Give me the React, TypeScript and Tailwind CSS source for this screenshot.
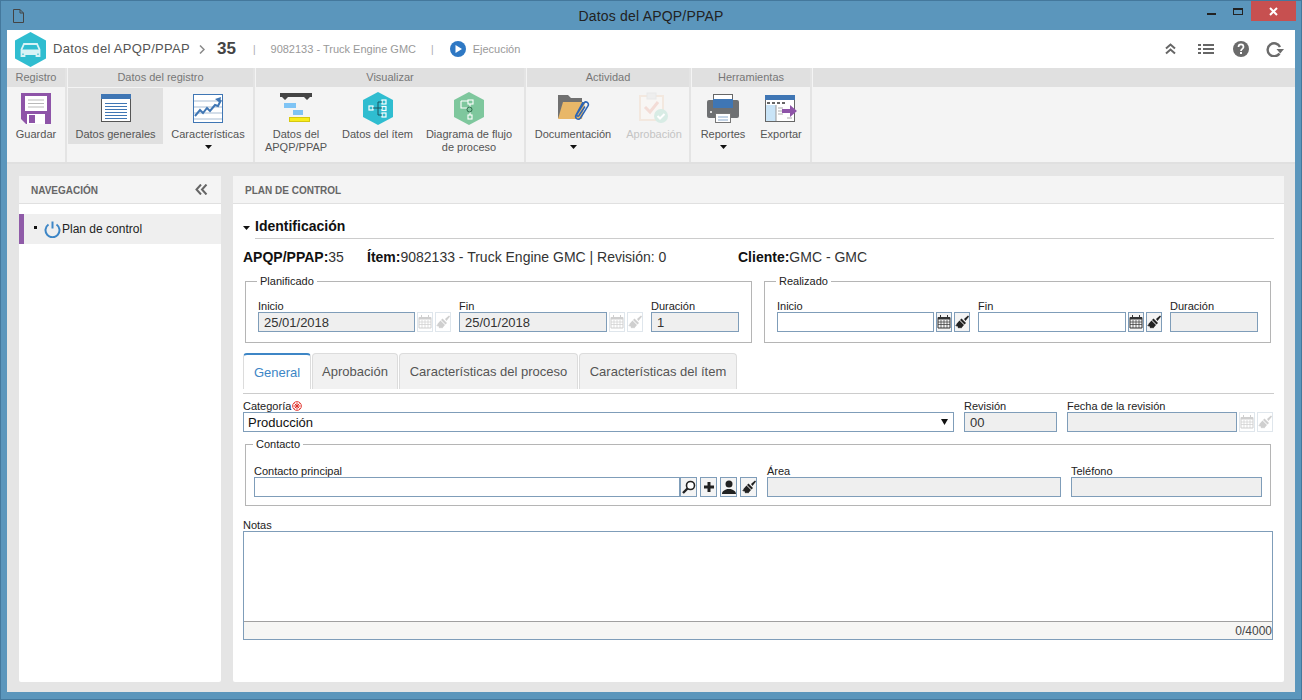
import React from "react";

const Caret = ({ className = "" }: { className?: string }) => (
  <svg width="7" height="4" viewBox="0 0 7 4" className={className}><path d="M0 0h7L3.500 4z" fill="#111" /></svg>
);

const Floppy = () => (
  <svg width="31" height="31" viewBox="0 0 31 31">
    <path d="M0 0h30v31H5l-5-5z" fill="#8e54a8" />
    <rect x="4" y="3" width="22" height="15" fill="#fff" />
    <path d="M7 7h16M7 10.500h16M7 14h16" stroke="#b9b9b9" strokeWidth="1" />
    <rect x="6" y="21" width="18" height="10" fill="#fff" />
    <rect x="8" y="22" width="6" height="8" fill="#8e54a8" />
  </svg>
);
const GeneralIcon = () => (
  <svg width="30" height="28" viewBox="0 0 30 28">
    <rect x=".5" y=".5" width="29" height="27" fill="#fff" stroke="#555" />
    <rect width="30" height="5" fill="#3f76b4" />
    <path d="M4 9.500h22M4 12.500h22M4 15.500h22M4 18.500h22M4 21.500h22M4 24.500h22" stroke="#3f76b4" strokeWidth="1" />
  </svg>
);
const ChartIcon = () => (
  <svg width="30" height="29" viewBox="0 0 30 29">
    <rect x=".5" y=".5" width="29" height="28" fill="#fff" stroke="#3f76b4" />
    <path d="M1 7h28M1 13h28M1 19h28M1 25h28" stroke="#a9bdd3" strokeWidth="1" />
    <path d="M2 22l5-6 3 3 4-5 3 3 5-6 3 1 3-6" fill="none" stroke="#3f76b4" strokeWidth="2" />
    <path d="M22 5l6-2-1 6z" fill="#3f76b4" />
  </svg>
);
const GanttIcon = () => (
  <svg width="33" height="30" viewBox="0 0 33 30">
    <rect width="32" height="4" fill="#444" />
    <path d="M2 4h6l-3 3zM24 4h6l-3 3z" fill="#444" />
    <rect x="4" y="10" width="12" height="5" fill="#7fc4f5" />
    <rect x="13" y="17" width="10" height="5" fill="#7fc4f5" />
    <rect x="9.500" y="24.500" width="20" height="4" fill="#f8ec1c" stroke="#d6c80f" />
  </svg>
);
const Hex = ({ color, children }: { color: string; children: React.ReactNode }) => (
  <svg width="30" height="33" viewBox="0 0 30 33">
    <path d="M15 0l15 8v17l-15 8-15-8V8z" fill={color} />
    {children}
  </svg>
);
const TreeHex = () => (
  <Hex color="#2fbdd0">
    <g fill="none" stroke="#fff" strokeWidth="1.200">
      <rect x="6" y="14" width="4" height="4" />
      <rect x="19" y="8" width="4" height="4" />
      <rect x="19" y="14.500" width="4" height="4" />
      <rect x="19" y="21" width="4" height="4" />
    </g>
    <path d="M10 16h9M15 10v13M15 10h4M15 23h4" stroke="#1d5560" strokeWidth="1" fill="none" />
  </Hex>
);
const FlowHex = () => (
  <Hex color="#7ec79d">
    <g fill="none" stroke="#fff" strokeWidth="1.100">
      <rect x="14" y="8" width="5" height="4" />
      <rect x="14" y="23" width="4" height="4" />
      <path d="M7 9h7M7 9v7h7M16 12v3M16 20v3" />
    </g>
    <circle cx="15.500" cy="17.500" r="2.500" fill="none" stroke="#2e6b4c" strokeWidth="1" />
  </Hex>
);
const FolderIcon = () => (
  <svg width="33" height="32" viewBox="0 0 33 32">
    <path d="M1 3h10l3 3h11v20H1z" fill="#707070" />
    <path d="M6 10h22l-3 17H1z" fill="#e8b768" />
    <path d="M26 10l-7 13c-1.500 3 2 6 4.500 3L31 14c1.500-3-2-5.500-4-3l-7 11c-1 1.500.8 3 2 1.500l6-9" fill="none" stroke="#2b64b5" strokeWidth="1.500" />
  </svg>
);
const ApprovalIcon = () => (
  <svg width="30" height="32" viewBox="0 0 30 32">
    <rect x="1" y="4" width="23" height="24" fill="#f8f6f4" stroke="#f3e8df" strokeWidth="2" />
    <rect x="8" y="1" width="9" height="6" fill="#eee" stroke="#e8e8e8" />
    <path d="M6 15l5 5 8-10" fill="none" stroke="#f3dcd6" strokeWidth="3" />
    <circle cx="22" cy="24" r="7" fill="#d8ece5" />
    <path d="M18.500 24l2.500 2.500 4.500-4.500" fill="none" stroke="#fff" strokeWidth="2" />
  </svg>
);
const PrinterIcon = () => (
  <svg width="32" height="29" viewBox="0 0 32 29">
    <rect x="6.500" y=".5" width="19" height="8" fill="#fff" stroke="#666" />
    <path d="M2 6h28a2 2 0 012 2v14a2 2 0 01-2 2H2a2 2 0 01-2-2V8a2 2 0 012-2z" fill="#6e7072" />
    <rect x="6" y="5" width="20" height="9" fill="#3f76b4" />
    <rect x="3" y="17" width="2" height="2" fill="#ddd" />
    <rect x="8.500" y="19.500" width="15" height="9" fill="#fff" stroke="#777" />
    <path d="M11 23h10M11 26h10" stroke="#88a8cc" strokeWidth="1" />
  </svg>
);
const ExportIcon = () => (
  <svg width="32" height="27" viewBox="0 0 32 27">
    <rect x=".5" y=".5" width="29" height="26" fill="#fff" stroke="#666" />
    <rect width="30" height="5" fill="#3f76b4" />
    <rect x="1" y="10" width="10" height="16" fill="#c9e4f7" />
    <path d="M2 8h3M7 8h3M12 8h3M17 8h3" stroke="#666" strokeWidth="2" />
    <path d="M11 10v16" stroke="#999" />
    <path d="M13 13h5M13 16h5M13 19h5M22 23h5" stroke="#aaa" />
    <path d="M17 14h8v-4l7 6-7 6v-4h-8z" fill="#8e54a8" />
  </svg>
);

const Calendar = ({ c }: { c: string }) => (
  <svg width="14" height="14" viewBox="0 0 14 14">
    <path d="M1 2.500h12v10.500H1z" fill="none" stroke={c} />
    <path d="M1 2h12v2.500H1z" fill={c} />
    <path d="M3.500 0v3M10.500 0v3" stroke={c} />
    <path d="M1 7h12M1 9.500h12M4 5v8M7 5v8M10 5v8" stroke={c} strokeWidth=".7" />
  </svg>
);
const Brush = ({ c }: { c: string }) => (
  <svg width="14" height="14" viewBox="0 0 14 14">
    <path d="M9 4l4-3.500 1 1L10.500 6z" fill={c} />
    <path d="M6.500 3.500l4.500 4.500-1.500 1.500-4.500-4.500z" fill={c} />
    <path d="M4.500 5.500l4.500 4.500-3 3.500-1-1-1 1-1.500-1.500.5-1-1 .5L0 10.500l2-.5-1-.5z" fill={c} />
  </svg>
);
const Search = () => (
  <svg width="14" height="14" viewBox="0 0 14 14"><circle cx="8.500" cy="5.500" r="4" fill="#fff" stroke="#222" strokeWidth="1.600" /><path d="M5.500 8.500L1 13" stroke="#222" strokeWidth="2.400" /></svg>
);
const Plus = () => (
  <svg width="12" height="12" viewBox="0 0 12 12"><path d="M4.500 1h3v3.500H11v3H7.500V11h-3V7.500H1v-3h3.500z" fill="#222" /></svg>
);
const User = () => (
  <svg width="14" height="14" viewBox="0 0 14 14"><circle cx="7" cy="4" r="3.500" fill="#222" /><path d="M0 14c0-3 3-4 5-5h4c2 1 5 2 5 5z" fill="#222" /></svg>
);

const IconBtn = ({ children, on = false, w = "w-[16px]" }: { children: React.ReactNode; on?: boolean; w?: string }) => (
  <div className={`${w} h-[20px] shrink-0 flex items-center justify-center border ${on ? "border-[#7f9db9] bg-[#f4f4f4]" : "border-[#dfe6ec] bg-white"}`}>
    {children}
  </div>
);

const Field = ({ label, w, value = "", off = false, mr = "" }: { label: string; w: string; value?: string; off?: boolean; mr?: string }) => (
  <div className={`flex flex-col shrink-0 ${mr}`}>
    <div className="h-[12px] text-[11px] leading-[12px] text-[#222] whitespace-nowrap">{label}</div>
    <div className={`${w} h-[20px] border border-[#7f9db9] ${off ? "bg-[#efefef]" : "bg-white"} pl-[5px] text-[13px] leading-[20px] text-[#333]`}>{value}</div>
  </div>
);

const DateField = ({ label, w, value = "", off = false }: { label: string; w: string; value?: string; off?: boolean }) => (
  <div className="flex items-end gap-[2px] shrink-0">
    <Field label={label} w={w} value={value} off={off} />
    <IconBtn on={!off}><Calendar c={off ? "#cfcfcf" : "#333"} /></IconBtn>
    <IconBtn on={!off}><Brush c={off ? "#cfcfcf" : "#222"} /></IconBtn>
  </div>
);

const Group = ({ title, w, children }: { title: string; w: string; children: React.ReactNode }) => (
  <div className={`${w} shrink-0 flex flex-col border-r-2 border-[#e4e4e4]`}>
    <div className="h-[19px] ml-[1px] bg-[#e0e0e0] text-center text-[11px] leading-[19px] text-[#777]">{title}</div>
    <div className="flex-1 flex pt-[1px] pl-[1px]">{children}</div>
  </div>
);

const RibbonBtn = ({ w, icon, label, caret = false, active = false, faded = false }: { w: string; icon: React.ReactNode; label: React.ReactNode; caret?: boolean; active?: boolean; faded?: boolean }) => (
  <div className={`${w} h-[56px] shrink-0 flex flex-col items-center ${active ? "bg-[#e0e0e0]" : ""}`}>
    <div className="h-[40px] shrink-0 flex items-center justify-center">{icon}</div>
    <div className={`shrink-0 text-[11px] leading-[13px] text-center whitespace-nowrap ${faded ? "text-[#c4c4c4]" : "text-[#555]"}`}>{label}</div>
    {caret && <Caret className="mt-[4px] shrink-0" />}
  </div>
);

const Legend = ({ children }: { children: React.ReactNode }) => (
  <legend className="ml-[-1px] px-[3px] text-[11px] leading-[14px] text-[#222]">{children}</legend>
);

const Tab = ({ w, children, active = false }: { w: string; children: React.ReactNode; active?: boolean }) => (
  <div className={`${w} h-[36px] shrink-0 rounded-t-[4px] text-center text-[13px] ${active ? "bg-white border-x border-[#dcdcdc] border-t-2 border-t-[#3d86c6] text-[#3d86c6] leading-[36px]" : "bg-[#f1f1f1] border-x border-t border-[#dcdcdc] text-[#555] leading-[35px]"}`}>
    {children}
  </div>
);

export default function App() {
  return (
    <div className="w-[1302px] h-[700px] bg-[#5b96bc] border border-[#44789c] flex flex-col overflow-hidden" style={{ fontFamily: '"Liberation Sans", Arial, sans-serif' }}>
      {/* title bar */}
      <div className="h-[29px] shrink-0 flex items-start">
        <div className="w-[200px] pl-[12px] pt-[8px]">
          <svg width="11" height="14" viewBox="0 0 11 14"><path d="M.5.500h6.500l3.500 3.500v9.500h-10zM7 .5v3.500h3.500" fill="none" stroke="#444" /></svg>
        </div>
        <div className="flex-1 text-center text-[14px] tracking-[.2px] leading-[30px] text-[#222]">Datos del APQP/PPAP</div>
        <div className="w-[200px] flex justify-end items-start pr-[5px]">
          <div className="w-[9px] h-[2px] bg-[#222] mt-[12px] mr-[17px]" />
          <div className="w-[10px] h-[7px] border border-[#222] border-t-2 mt-[7px] mr-[8px]" />
          <div className="w-[45px] h-[20px] bg-[#c75050] flex items-center justify-center">
            <svg width="9" height="9" viewBox="0 0 9 9"><path d="M1 1l7 7M8 1L1 8" stroke="#fff" strokeWidth="2" /></svg>
          </div>
        </div>
      </div>

      <div className="flex-1 mx-[6px] mb-[7px] flex flex-col min-h-0">
        {/* record header */}
        <div className="h-[38px] shrink-0 bg-white flex items-center pl-[8px]">
          <svg width="31" height="35" viewBox="0 0 31 35">
            <path d="M15.500 0L31 8.500v18L15.500 35 0 26.500v-18z" fill="#2fbdd0" />
            <path d="M9 12h13l2.500 5.500V24h-3v-2H9.500v2h-3v-6.500z" fill="none" stroke="#d8f3f6" strokeWidth="1.800" />
            <path d="M7 17.500h17v4H7z" fill="#d8f3f6" />
          </svg>
          <span className="ml-[7px] text-[13px] font-normal text-[#555] tracking-[.3px]">Datos del APQP/PPAP</span>
          <svg className="ml-[9px]" width="6" height="9" viewBox="0 0 6 9"><path d="M1 .5l4 4-4 4" fill="none" stroke="#888" strokeWidth="1.500" /></svg>
          <span className="ml-[12px] text-[17px] font-bold text-[#444]">35</span>
          <span className="ml-[17px] text-[10px] text-[#aaa]">|</span>
          <span className="ml-[15px] text-[11px] text-[#999]">9082133 - Truck Engine GMC</span>
          <span className="ml-[15px] text-[10px] text-[#aaa]">|</span>
          <svg className="ml-[16px]" width="16" height="16" viewBox="0 0 16 16"><circle cx="8" cy="8" r="8" fill="#2e78c4" /><path d="M5.500 4l6.500 4-6.500 4z" fill="#fff" /></svg>
          <span className="ml-[7px] text-[11px] text-[#999]">Ejecución</span>
          <div className="ml-auto flex items-center pr-[11px]">
            <svg className="mr-[22px]" width="11" height="12" viewBox="0 0 11 12"><path d="M1 5.500l4.500-4 4.500 4M1 10.500l4.500-4 4.500 4" fill="none" stroke="#666" strokeWidth="2" /></svg>
            <svg className="mr-[19px]" width="16" height="10" viewBox="0 0 16 10"><path d="M0 1h3M5 1h11M0 5h3M5 5h11M0 9h3M5 9h11" stroke="#666" strokeWidth="2" /></svg>
            <svg className="mr-[17px]" width="16" height="16" viewBox="0 0 16 16"><circle cx="8" cy="8" r="8" fill="#6b6b6b" /><path d="M5.500 6c0-3.500 5-3.500 5 0 0 2-2.500 1.800-2.500 4" fill="none" stroke="#fff" strokeWidth="1.700" /><rect x="7" y="11" width="2" height="2" fill="#fff" /></svg>
            <svg width="18" height="16" viewBox="0 0 18 16"><path d="M13.500 12.500A6.500 6.500 0 1 1 14 6" fill="none" stroke="#6b6b6b" strokeWidth="2.400" /><path d="M10.500 8h7.500l-3.750 4.500z" fill="#6b6b6b" /></svg>
          </div>
        </div>

        {/* ribbon */}
        <div className="h-[96px] shrink-0 bg-[#f4f4f4] border-b-2 border-[#e0e0e0] flex">
          <div className="w-[60px] shrink-0 flex flex-col border-r-2 border-[#e4e4e4]">
            <div className="h-[19px] bg-[#e0e0e0] text-center text-[11px] leading-[19px] text-[#777]">Registro</div>
            <div className="flex-1 flex pt-[1px]">
              <RibbonBtn w="w-[58px]" icon={<Floppy />} label="Guardar" />
            </div>
          </div>
          <Group title="Datos del registro" w="w-[188px]">
            <RibbonBtn w="w-[95px]" active icon={<GeneralIcon />} label="Datos generales" />
            <RibbonBtn w="w-[90px]" icon={<ChartIcon />} label="Características" caret />
          </Group>
          <Group title="Visualizar" w="w-[271px]">
            <RibbonBtn w="w-[80px]" icon={<GanttIcon />} label={<>Datos del<br />APQP/PPAP</>} />
            <RibbonBtn w="w-[83px]" icon={<TreeHex />} label="Datos del ítem" />
            <RibbonBtn w="w-[100px]" icon={<FlowHex />} label={<>Diagrama de flujo<br />de proceso</>} />
          </Group>
          <Group title="Actividad" w="w-[165px]">
            <RibbonBtn w="w-[92px]" icon={<FolderIcon />} label="Documentación" caret />
            <RibbonBtn w="w-[70px]" faded icon={<ApprovalIcon />} label="Aprobación" />
          </Group>
          <Group title="Herramientas" w="w-[121px]">
            <RibbonBtn w="w-[62px]" icon={<PrinterIcon />} label="Reportes" caret />
            <RibbonBtn w="w-[54px]" icon={<ExportIcon />} label="Exportar" />
          </Group>
          <div className="flex-1"><div className="h-[19px] ml-[1px] bg-[#e0e0e0]" /></div>
        </div>

        {/* body */}
        <div className="flex-1 min-h-0 bg-[#e5e5e5] flex gap-[12px] pt-[12px] pl-[12px] pr-[11px] pb-[10px]">
          {/* navigation */}
          <div className="w-[202px] shrink-0 bg-white rounded-[2px] flex flex-col">
            <div className="h-[28px] bg-[#f4f4f4] border-b border-[#e0e0e0] flex items-center justify-between pl-[12px] pr-[13px]">
              <span className="pt-[1px] text-[10px] font-bold text-[#666]">NAVEGACIÓN</span>
              <svg width="13" height="11" viewBox="0 0 13 11"><path d="M6 .5L1.500 5.500 6 10.500M11.500 .5L7 5.500l4.500 5" fill="none" stroke="#666" strokeWidth="2" /></svg>
            </div>
            <div className="mt-[10px] h-[30px] bg-[#efefef] border-l-[5px] border-[#8f5ba8] flex items-center">
              <div className="ml-[10px] w-[3px] h-[3px] bg-[#111] mb-[3px]" />
              <svg className="ml-[7px]" width="17" height="17" viewBox="0 0 17 17"><path d="M4.500 3.500a7 7 0 1 0 8 0" fill="none" stroke="#3d86c6" strokeWidth="2" /><path d="M8.500 .5v7" stroke="#3d86c6" strokeWidth="2" /></svg>
              <span className="ml-[1px] text-[12px] text-[#222]">Plan de control</span>
            </div>
          </div>

          {/* main */}
          <div className="flex-1 min-w-0 bg-white rounded-[2px] flex flex-col">
            <div className="h-[28px] shrink-0 bg-[#f4f4f4] border-b border-[#e0e0e0] flex items-center pl-[12px]">
              <span className="pt-[1px] text-[10px] font-bold text-[#666]">PLAN DE CONTROL</span>
            </div>
            <div className="px-[10px] flex flex-col">
              <div className="mt-[13px] flex items-center h-[22px]">
                <Caret className="mr-[5px]" />
                <div className="flex-1 h-[22px] border-b border-[#ccc] text-[14px] font-bold leading-[18px] text-[#111]">Identificación</div>
              </div>
              <div className="mt-[10px] h-[17px] flex text-[14px] leading-[17px] text-[#333]">
                <div className="w-[124px]"><b className="text-[#111]">APQP/PPAP:</b>35</div>
                <div className="w-[371px]"><b className="text-[#111]">Ítem:</b>9082133 - Truck Engine GMC | Revisión: 0</div>
                <div><b className="text-[#111]">Cliente:</b>GMC - GMC</div>
              </div>

              <div className="mt-[8px] ml-[2px] flex w-[1026px] justify-between">
                <fieldset className="w-[507px] h-[69px] border border-[#b5b5b5] pl-[12px]">
                  <Legend>Planificado</Legend>
                  <div className="mt-[12px] flex gap-[8px]">
                    <DateField label="Inicio" w="w-[157px]" value="25/01/2018" off />
                    <DateField label="Fin" w="w-[148px]" value="25/01/2018" off />
                    <Field label="Duración" w="w-[88px]" value="1" off />
                  </div>
                </fieldset>
                <fieldset className="w-[507px] h-[69px] border border-[#b5b5b5] pl-[12px]">
                  <Legend>Realizado</Legend>
                  <div className="mt-[12px] flex gap-[8px]">
                    <DateField label="Inicio" w="w-[157px]" />
                    <DateField label="Fin" w="w-[148px]" />
                    <Field label="Duración" w="w-[88px]" off />
                  </div>
                </fieldset>
              </div>

              <div className="mt-[10px] h-[41px] border-b border-[#ccc] flex items-start gap-[1px]">
                <Tab w="w-[68px]" active>General</Tab>
                <Tab w="w-[86px]">Aprobación</Tab>
                <Tab w="w-[179px]">Características del proceso</Tab>
                <Tab w="w-[158px]">Características del ítem</Tab>
              </div>

              <div className="mt-[6px] flex items-end">
                <div className="w-[711px] shrink-0 flex flex-col">
                  <div className="h-[12px] flex items-center text-[11px] text-[#222]">
                    Categoría
                    <svg className="ml-[1px]" width="10" height="10" viewBox="0 0 10 10"><circle cx="5" cy="5" r="4.400" fill="#fff" stroke="#e0302a" strokeWidth=".9" /><path d="M5 1.500v7M1.500 5h7M2.500 2.500l5 5M7.500 2.500l-5 5" stroke="#e0302a" strokeWidth="1" /></svg>
                  </div>
                  <div className="h-[20px] border border-[#7f9db9] bg-white pl-[4px] pr-[5px] flex items-center justify-between text-[13px] leading-[20px] text-[#111]">
                    <span className="pt-[1px]">Producción</span>
                    <svg width="7" height="6" viewBox="0 0 7 6"><path d="M0 0h7L3.500 6z" fill="#111" /></svg>
                  </div>
                </div>
                <Field label="Revisión" w="w-[93px]" value="00" off mr="ml-[10px]" />
                <div className="ml-[10px]">
                  <DateField label="Fecha de la revisión" w="w-[170px]" off />
                </div>
              </div>

              <fieldset className="mt-[5px] ml-[2px] w-[1026px] h-[69px] border border-[#b5b5b5] pl-[8px]">
                <Legend>Contacto</Legend>
                <div className="mt-[14px] flex items-end">
                  <Field label="Contacto principal" w="w-[426px]" />
                  <div className="flex gap-[3px]">
                    <IconBtn on w="w-[17px]"><Search /></IconBtn>
                    <IconBtn on w="w-[17px]"><Plus /></IconBtn>
                    <IconBtn on w="w-[17px]"><User /></IconBtn>
                    <IconBtn on w="w-[17px]"><Brush c="#222" /></IconBtn>
                  </div>
                  <Field label="Área" w="w-[294px]" off mr="ml-[10px]" />
                  <Field label="Teléfono" w="w-[191px]" off mr="ml-[10px]" />
                </div>
              </fieldset>

              <div className="mt-[13px] h-[12px] text-[11px] leading-[12px] text-[#222]">Notas</div>
              <div className="h-[109px] w-[1030px] border border-[#7f9db9] flex flex-col bg-white">
                <div className="flex-1" />
                <div className="h-[18px] border-t border-[#a0a0a0] bg-[#f6f6f4] text-right text-[12px] leading-[18px] text-[#444]">0/4000</div>
              </div>
            </div>
          </div>
        </div>
      </div>
    </div>
  );
}
